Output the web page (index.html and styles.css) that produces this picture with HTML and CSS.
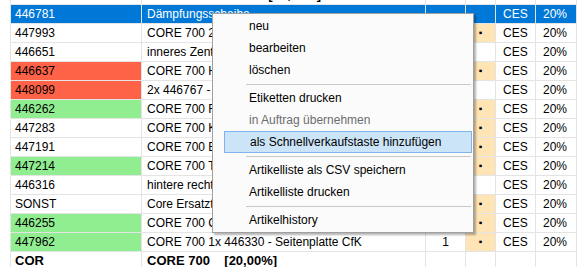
FILE: index.html
```html
<!DOCTYPE html>
<html lang="de">
<head>
  <meta charset="UTF-8" />
  <title>Artikelliste</title>
  <link rel="stylesheet" href="styles.css">
</head>
<body>
  <div class="grid">
    <div class="row total">
      <div class="stub"></div><div class="cell">CES</div><div class="cell">CORE 700 Rahmen [20,00%]</div><div class="cell mid"></div><div class="cell mid"></div><div class="cell"></div><div class="cell"></div>
    </div>
    <div class="row selected">
      <div class="stub"></div><div class="cell">446781</div><div class="cell">Dämpfungsscheibe</div><div class="cell mid"></div><div class="cell mid"></div><div class="cell">CES</div><div class="cell">20%</div>
    </div>
    <div class="row">
      <div class="stub"></div><div class="cell">447993</div><div class="cell">CORE 700 2x Dämpfer</div><div class="cell mid">1</div><div class="cell mid flag">▪</div><div class="cell">CES</div><div class="cell">20%</div>
    </div>
    <div class="row">
      <div class="stub"></div><div class="cell">446651</div><div class="cell">inneres Zentralstück</div><div class="cell mid">1</div><div class="cell mid"></div><div class="cell">CES</div><div class="cell">20%</div>
    </div>
    <div class="row">
      <div class="stub"></div><div class="cell red">446637</div><div class="cell">CORE 700 Hauptrahmen</div><div class="cell mid">1</div><div class="cell mid flag">▪</div><div class="cell">CES</div><div class="cell">20%</div>
    </div>
    <div class="row">
      <div class="stub"></div><div class="cell red">448099</div><div class="cell">2x 446767 - Lagerbuchse</div><div class="cell mid">1</div><div class="cell mid"></div><div class="cell">CES</div><div class="cell">20%</div>
    </div>
    <div class="row">
      <div class="stub"></div><div class="cell green">446262</div><div class="cell">CORE 700 Federbein</div><div class="cell mid">1</div><div class="cell mid flag">▪</div><div class="cell">CES</div><div class="cell">20%</div>
    </div>
    <div class="row">
      <div class="stub"></div><div class="cell">447283</div><div class="cell">CORE 700 Kettenrad</div><div class="cell mid">1</div><div class="cell mid flag">▪</div><div class="cell">CES</div><div class="cell">20%</div>
    </div>
    <div class="row">
      <div class="stub"></div><div class="cell">447191</div><div class="cell">CORE 700 Endkappe</div><div class="cell mid">1</div><div class="cell mid flag">▪</div><div class="cell">CES</div><div class="cell">20%</div>
    </div>
    <div class="row">
      <div class="stub"></div><div class="cell green">447214</div><div class="cell">CORE 700 Tankdeckel</div><div class="cell mid">1</div><div class="cell mid flag">▪</div><div class="cell">CES</div><div class="cell">20%</div>
    </div>
    <div class="row">
      <div class="stub"></div><div class="cell">446316</div><div class="cell">hintere rechte Abdeckung</div><div class="cell mid">1</div><div class="cell mid"></div><div class="cell">CES</div><div class="cell">20%</div>
    </div>
    <div class="row">
      <div class="stub"></div><div class="cell">SONST</div><div class="cell">Core Ersatzteilset</div><div class="cell mid">1</div><div class="cell mid flag">▪</div><div class="cell">CES</div><div class="cell">20%</div>
    </div>
    <div class="row">
      <div class="stub"></div><div class="cell green">446255</div><div class="cell">CORE 700 Carbonhaube</div><div class="cell mid">1</div><div class="cell mid flag">▪</div><div class="cell">CES</div><div class="cell">20%</div>
    </div>
    <div class="row">
      <div class="stub"></div><div class="cell green">447962</div><div class="cell">CORE 700 1x 446330 - Seitenplatte CfK</div><div class="cell mid">1</div><div class="cell mid flag">▪</div><div class="cell">CES</div><div class="cell">20%</div>
    </div>
    <div class="row total">
      <div class="stub"></div><div class="cell">COR</div><div class="cell">CORE 700    [20,00%]</div><div class="cell mid"></div><div class="cell mid"></div><div class="cell"></div><div class="cell"></div>
    </div>
  </div>

  <div class="menu">
    <div class="item">neu</div>
    <div class="item">bearbeiten</div>
    <div class="item">löschen</div>
    <div class="sep"></div>
    <div class="item">Etiketten drucken</div>
    <div class="item disabled">in Auftrag übernehmen</div>
    <div class="item hot">als Schnellverkaufstaste hinzufügen</div>
    <div class="sep"></div>
    <div class="item">Artikelliste als CSV speichern</div>
    <div class="item">Artikelliste drucken</div>
    <div class="sep"></div>
    <div class="item">Artikelhistory</div>
  </div>
</body>
</html>
```

FILE: styles.css
```css
body {
  margin: 0;
  background: #fff;
  font-family: "Liberation Sans", Arial, sans-serif;
  font-size: 12px;
  color: #000;
  overflow: hidden;
}

.grid {
  margin-top: -14px;
  width: 577px;
}

.row {
  display: grid;
  grid-template-columns: 11px 131px 284px 40px 30px 40px 41px;
  height: 19px;
}

.cell, .stub {
  box-sizing: border-box;
  height: 19px;
  line-height: 18px;
  border-right: 1px solid #e4e4e4;
  border-bottom: 1px solid #e4e4e4;
  padding: 0 4px;
  white-space: pre;
  overflow: hidden;
}

.stub {
  border-bottom-color: #fff;
  padding: 0;
}

.mid {
  text-align: center;
  padding: 0;
}

.cell:nth-child(3) {
  padding-left: 5px;
}

.cell:nth-child(6), .cell:nth-child(7) {
  padding-left: 7px;
}

.flag {
  background: #ffe4b5;
  font-size: 10px;
}

.red {
  background: #ff6347;
}

.green {
  background: #90ee90;
}

.selected .cell {
  background: #0078d7;
  color: #fff;
}

.total .cell {
  font-weight: bold;
  font-size: 13px;
}

/* Kontextmenü */
.menu {
  position: absolute;
  left: 212px;
  top: 13px;
  width: 260px;
  padding: 1px 0;
  background: #fbfbfb;
  border: 1px solid #a0a0a0;
  box-shadow: 2px 2px 2px rgba(0,0,0,0.3);
}

.item {
  height: 22px;
  line-height: 22px;
  padding-left: 36px;
  box-sizing: border-box;
}

.item.disabled {
  color: #6d6d6d;
}

.item.hot {
  margin: 0 1px 0 11px;
  padding-left: 25px;
  background: #cce4f7;
  border: 1px solid #7eb4ea;
  line-height: 20px;
}

.sep {
  height: 6px;
  margin: 0 2px 0 33px;
  display: flex;
  align-items: center;
}

.sep::after {
  content: "";
  flex: 1;
  border-top: 1px solid #c8c8c8;
}
```
